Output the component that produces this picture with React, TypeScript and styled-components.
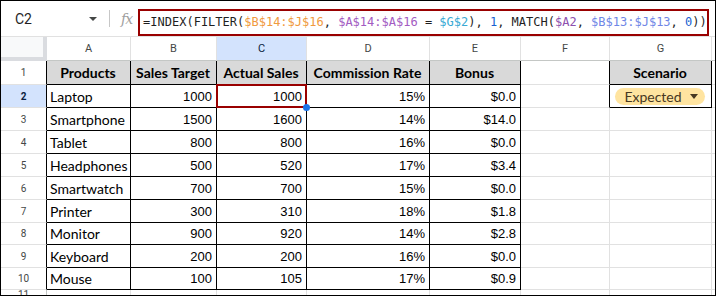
import React from 'react';
import styled, { createGlobalStyle } from 'styled-components';

const GlobalStyle = createGlobalStyle`
  html, body {
    margin: 0;
    padding: 0;
    background: #ffffff;
  }
  * {
    box-sizing: border-box;
  }
`;

const COLUMNS = ['A', 'B', 'C', 'D', 'E', 'F', 'G'];
const ROW_HEIGHTS = [24, 23, 23, 23, 23, 23, 23, 22, 23, 22, 10];

const HEADERS = ['Products', 'Sales Target', 'Actual Sales', 'Commission Rate', 'Bonus'];

const PRODUCTS: [string, number, number, string, string][] = [
  ['Laptop', 1000, 1000, '15%', '$0.0'],
  ['Smartphone', 1500, 1600, '14%', '$14.0'],
  ['Tablet', 800, 800, '16%', '$0.0'],
  ['Headphones', 500, 520, '17%', '$3.4'],
  ['Smartwatch', 700, 700, '15%', '$0.0'],
  ['Printer', 300, 310, '18%', '$1.8'],
  ['Monitor', 900, 920, '14%', '$2.8'],
  ['Keyboard', 200, 200, '16%', '$0.0'],
  ['Mouse', 100, 105, '17%', '$0.9'],
];

const GRID_LINE = '#e1e1e1';
const HEAD_LINE = '#c4c7c5';

type Edge = 'black' | 'grid' | 'head';

const edgeColor = (e: Edge) => (e === 'black' ? '#000000' : e === 'head' ? HEAD_LINE : GRID_LINE);

export default function App() {
  const rows = PRODUCTS.length + 1;

  const renderRow = (r: number) => {
    // r: 1-based sheet row
    const inTable = r >= 1 && r <= 10;
    const cells: React.ReactNode[] = [];

    cells.push(
      <RowHead key={`h${r}`} $active={r === 2} $right={inTable ? 'black' : 'head'}>
        {r}
      </RowHead>
    );

    COLUMNS.forEach((col, ci) => {
      const inData = inTable && ci <= 4;
      const inScenario = col === 'G' && (r === 1 || r === 2);
      const right: Edge = inData || inScenario || (col === 'F' && (r === 1 || r === 2)) ? 'black' : 'grid';
      const bottom: Edge = inData || inScenario ? 'black' : 'grid';
      const key = `${col}${r}`;

      let content: React.ReactNode = null;
      let kind: 'head' | 'text' | 'num' = 'text';

      if (r === 1 && ci <= 4) {
        content = HEADERS[ci];
        kind = 'head';
      } else if (r === 1 && col === 'G') {
        content = 'Scenario';
        kind = 'head';
      } else if (r === 2 && col === 'G') {
        content = (
          <Chip>
            Expected
            <ChipArrow />
          </Chip>
        );
        kind = 'head';
      } else if (r >= 2 && r <= 10 && ci <= 4) {
        const item = PRODUCTS[r - 2];
        content = item[ci];
        kind = ci === 0 ? 'text' : 'num';
      }

      cells.push(
        <Cell
          key={key}
          $right={right}
          $bottom={bottom}
          $kind={kind}
          $fill={r === 1 && (ci <= 4 || col === 'G')}
          $selected={key === 'C2'}
        >
          {content}
          {key === 'C2' && <FillHandle />}
        </Cell>
      );
    });

    cells.push(<Cell key={`x${r}`} $right="grid" $bottom="grid" $kind="text" $fill={false} $selected={false} />);
    return cells;
  };

  return (
    <>
      <GlobalStyle />
      <Frame>
        <FormulaBar>
          <NameBox>
            C2
            <NameArrow />
          </NameBox>
          <BarDivider />
          <FxLabel>fx</FxLabel>
          <FormulaBox>
            <Tok>=INDEX(FILTER(</Tok>
            <Tok $c="#f09a3e">$B$14:$J$16</Tok>
            <Tok>, </Tok>
            <Tok $c="#a35bc2">$A$14:$A$16</Tok>
            <Tok> = </Tok>
            <Tok $c="#39a9d4">$G$2</Tok>
            <Tok>), </Tok>
            <Tok $c="#1a5fd0">1</Tok>
            <Tok>, MATCH(</Tok>
            <Tok $c="#8d4fae">$A2</Tok>
            <Tok>, </Tok>
            <Tok $c="#6f86e6">$B$13:$J$13</Tok>
            <Tok>, </Tok>
            <Tok $c="#1a5fd0">0</Tok>
            <Tok>))</Tok>
          </FormulaBox>
        </FormulaBar>
        <Grid>
          <Corner />
          {COLUMNS.map((c) => (
            <ColHead key={c} $active={c === 'C'}>
              {c}
            </ColHead>
          ))}
          <ColHead $active={false} />
          {Array.from({ length: rows + 1 }, (_, i) => renderRow(i + 1))}
        </Grid>
      </Frame>
    </>
  );
}

const Frame = styled.div`
  width: 716px;
  height: 296px;
  border: 1px solid #000000;
  overflow: hidden;
  background: #ffffff;
  font-family: Roboto, 'Liberation Sans', Arial, sans-serif;
`;

const FormulaBar = styled.div`
  display: flex;
  align-items: center;
  height: 36px;
  padding: 0 6px 0 14px;
  border-bottom: 1px solid ${GRID_LINE};
`;

const NameBox = styled.div`
  display: flex;
  align-items: center;
  justify-content: space-between;
  width: 82px;
  font-size: 14px;
  color: #1f1f1f;
`;

const NameArrow = styled.span`
  width: 0;
  height: 0;
  border-left: 4px solid transparent;
  border-right: 4px solid transparent;
  border-top: 4px solid #444746;
`;

const BarDivider = styled.span`
  width: 1px;
  height: 17px;
  margin-left: 12px;
  background: #c7c7c7;
`;

const FxLabel = styled.span`
  margin-left: 11px;
  font-family: 'DejaVu Serif', 'Liberation Serif', serif;
  font-style: italic;
  font-size: 14px;
  color: #a0a0a0;
  letter-spacing: -1px;
`;

const FormulaBox = styled.div`
  flex: 1;
  display: flex;
  align-items: center;
  height: 27px;
  margin-left: 6px;
  margin-top: 7px;
  padding-left: 3px;
  border: 2px solid #990000;
  font-family: 'DejaVu Sans Mono', 'Liberation Mono', monospace;
  font-size: 12px;
  color: #1f1f1f;
  white-space: pre;
`;

const Tok = styled.span<{ $c?: string }>`
  color: ${(p) => p.$c || '#1f1f1f'};
`;

const Grid = styled.div`
  display: grid;
  grid-template-columns: 46px 84px 86px 90px 123px 91px 89px 102px 1fr;
  grid-template-rows: 24px ${ROW_HEIGHTS.map((h) => `${h}px`).join(' ')};
`;

const Corner = styled.div`
  background: #f8f9fa;
  border-right: 4px solid #dadce0;
  border-bottom: 4px solid #dadce0;
`;

const ColHead = styled.div<{ $active: boolean }>`
  display: flex;
  align-items: center;
  justify-content: center;
  background: ${(p) => (p.$active ? '#d3e3fd' : '#ffffff')};
  border-right: 1px solid ${GRID_LINE};
  border-bottom: 1px solid ${HEAD_LINE};
  font-size: 11px;
  color: ${(p) => (p.$active ? '#0b1f3f' : '#444746')};
`;

const RowHead = styled.div<{ $active: boolean; $right: Edge }>`
  display: flex;
  align-items: center;
  justify-content: center;
  background: ${(p) => (p.$active ? '#d3e3fd' : '#ffffff')};
  border-right: 1px solid ${(p) => edgeColor(p.$right)};
  border-bottom: 1px solid ${GRID_LINE};
  font-size: 10px;
  font-weight: ${(p) => (p.$active ? 700 : 400)};
  color: ${(p) => (p.$active ? '#0b1f3f' : '#444746')};
`;

const Cell = styled.div<{
  $right: Edge;
  $bottom: Edge;
  $kind: 'head' | 'text' | 'num';
  $fill: boolean;
  $selected: boolean;
}>`
  position: relative;
  display: flex;
  align-items: center;
  justify-content: ${(p) => (p.$kind === 'head' ? 'center' : p.$kind === 'num' ? 'flex-end' : 'flex-start')};
  padding: 0 4px 0 3px;
  background: ${(p) => (p.$fill ? '#d9d9d9' : '#ffffff')};
  border-right: 1px solid ${(p) => edgeColor(p.$right)};
  border-bottom: 1px solid ${(p) => edgeColor(p.$bottom)};
  white-space: nowrap;
  font-family: ${(p) => (p.$kind === 'num' ? "'Liberation Sans', Arial, sans-serif" : "Lato, 'Open Sans', sans-serif")};
  font-size: ${(p) => (p.$kind === 'num' ? '13px' : '14px')};
  font-weight: ${(p) => (p.$kind === 'head' ? 700 : 400)};
  color: #000000;

  ${(p) =>
    p.$selected &&
    `
    &::after {
      content: '';
      position: absolute;
      top: -1px;
      left: -1px;
      right: -1px;
      bottom: -1px;
      border: 2px solid #990000;
      pointer-events: none;
    }
  `}
`;

const FillHandle = styled.span`
  position: absolute;
  right: -4px;
  bottom: -4px;
  width: 7px;
  height: 7px;
  border-radius: 50%;
  background: #1a73e8;
  z-index: 2;
`;

const Chip = styled.span`
  display: inline-flex;
  align-items: center;
  gap: 8px;
  height: 17px;
  padding: 0 7px 0 9px;
  border-radius: 9px;
  background: #ffe4a0;
  font-family: Lato, 'Open Sans', sans-serif;
  font-size: 14px;
  font-weight: 400;
  color: #473822;
`;

const ChipArrow = styled.span`
  width: 0;
  height: 0;
  border-left: 4.5px solid transparent;
  border-right: 4.5px solid transparent;
  border-top: 5px solid #473822;
`;
